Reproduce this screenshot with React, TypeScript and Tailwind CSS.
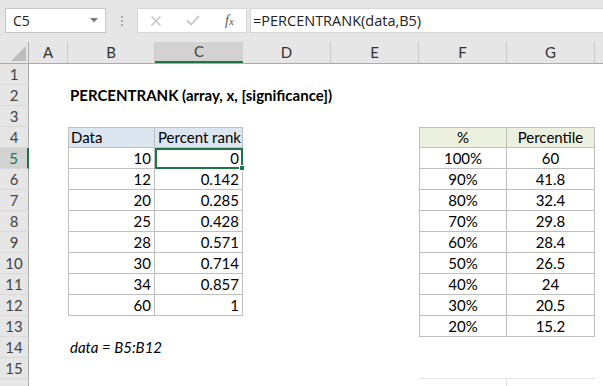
import React from 'react';

const font = "font-['Lato','Liberation_Sans',sans-serif]";

const colLetters = ['A', 'B', 'C', 'D', 'E', 'F', 'G', ''];
const colWidths = ['w-[39px]', 'w-[87px]', 'w-[88px]', 'w-[88px]', 'w-[88px]', 'w-[88px]', 'w-[88px]', 'flex-1'];

const leftTable: [string, string][] = [
  ['10', '0'],
  ['12', '0.142'],
  ['20', '0.285'],
  ['25', '0.428'],
  ['28', '0.571'],
  ['30', '0.714'],
  ['34', '0.857'],
  ['60', '1'],
];

const rightTable: [string, string][] = [
  ['100%', '60'],
  ['90%', '41.8'],
  ['80%', '32.4'],
  ['70%', '29.8'],
  ['60%', '28.4'],
  ['50%', '26.5'],
  ['40%', '24'],
  ['30%', '20.5'],
  ['20%', '15.2'],
];

type CellSpec = { text?: React.ReactNode; cls?: string };

// build the cell contents for one sheet row (columns A..H)
function rowCells(r: number): CellSpec[] {
  const cells: CellSpec[] = Array.from({ length: 8 }, () => ({}));
  const tb = 'border-r border-b border-[#bfbfbf]';

  if (r === 2) {
    cells[1] = { text: 'PERCENTRANK (array, x, [significance])', cls: 'font-bold whitespace-nowrap overflow-visible pl-[2px]' };
  }
  if (r === 4) {
    cells[1] = { text: 'Data', cls: `${tb} border-t border-l bg-[#dce6f1] pl-[2px]` };
    cells[2] = { text: 'Percent rank', cls: `${tb} border-t bg-[#dce6f1] pl-[3px]` };
    cells[5] = { text: '%', cls: `${tb} border-t border-l bg-[#ebf1de] justify-center` };
    cells[6] = { text: 'Percentile', cls: `${tb} border-t bg-[#ebf1de] justify-center` };
  }
  if (r >= 5 && r <= 12) {
    const [a, b] = leftTable[r - 5];
    cells[1] = { text: a, cls: `${tb} border-l justify-end pr-[3px]` };
    cells[2] = { text: b, cls: `${tb} justify-end pr-[3px]` };
  }
  if (r >= 5 && r <= 13) {
    const [a, b] = rightTable[r - 5];
    cells[5] = { text: a, cls: `${tb} border-l justify-center` };
    cells[6] = { text: b, cls: `${tb} justify-center` };
  }
  if (r === 14) {
    cells[1] = { text: 'data = B5:B12', cls: 'italic whitespace-nowrap pl-[2px]' };
  }
  if (r === 15) {
    cells[5] = { cls: 'border-b border-[#e3e3e3]' };
    cells[6] = { cls: 'border-b border-[#e3e3e3]' };
  }
  if (r === 16) {
    cells[5] = { cls: 'border-r border-[#e3e3e3]' };
  }
  return cells;
}

const FormulaBar = () => (
  <div className="flex h-[42px] items-start bg-[#e6e6e6] pt-[8px] pl-[5px]">
    <div className="flex h-[25px] w-[101px] items-center justify-between border border-[#c6c6c6] bg-white pl-[7px] pr-[7px] text-[14px] text-[#222] font-['Open_Sans','Liberation_Sans',sans-serif]">
      <span>C5</span>
      <svg width="8" height="5" viewBox="0 0 8 5">
        <path d="M0 0 L8 0 L4 4.5 Z" fill="#7a7a7a" />
      </svg>
    </div>
    <div className="flex h-[25px] w-[31px] flex-col items-center justify-center gap-[2px]">
      <span className="h-[2px] w-[2px] bg-[#a9a9a9]" />
      <span className="h-[2px] w-[2px] bg-[#a9a9a9]" />
      <span className="h-[2px] w-[2px] bg-[#a9a9a9]" />
    </div>
    <div className="flex h-[25px] w-[110px] items-center border border-[#d6d6d6] bg-white">
      <div className="flex w-[36px] justify-center">
        <svg width="12" height="12" viewBox="0 0 12 12">
          <path d="M1.5 1.5 L10.5 10.5 M10.5 1.5 L1.5 10.5" stroke="#c4c4c4" strokeWidth="1.6" />
        </svg>
      </div>
      <div className="flex w-[37px] justify-center">
        <svg width="14" height="11" viewBox="0 0 14 11">
          <path d="M1 5.5 L5 9.5 L13 1" stroke="#c4c4c4" strokeWidth="1.8" fill="none" />
        </svg>
      </div>
      <div className="flex flex-1 justify-center pl-[2px] text-[14px] italic text-[#555] font-['Liberation_Serif',serif]">
        <span>f</span>
        <span className="text-[11px] mt-[3px]">x</span>
      </div>
    </div>
    <div className="ml-[3px] flex h-[25px] flex-1 items-center border border-r-0 border-[#d6d6d6] bg-white pl-[2px] text-[14.5px] text-[#222] font-['Open_Sans','Liberation_Sans',sans-serif]">
      =PERCENTRANK(data,B5)
    </div>
  </div>
);

const ColumnHeaders = () => (
  <div className={`flex h-[22px] border-b border-[#ababab] bg-[#e6e6e6] text-[15px] text-[#333] ${font}`}>
    <div className="flex w-[29px] items-end justify-end border-r border-[#ababab] pb-[2px] pr-[2px]">
      <svg width="15" height="15" viewBox="0 0 15 15">
        <path d="M15 0 L15 15 L0 15 Z" fill="#bdbdbd" />
      </svg>
    </div>
    {colLetters.map((c, i) => (
      <div
        key={i}
        className={`flex items-center justify-center ${colWidths[i]} ${
          c === 'C'
            ? 'bg-[#d2d2d2] border-b-2 border-b-[#217346] text-[#444]'
            : i < 7
            ? 'border-r border-r-[#c9c9c9]'
            : ''
        }`}
      >
        {c}
      </div>
    ))}
  </div>
);

const SheetRow = ({ r }: { r: number }) => {
  const cells = rowCells(r);
  const active = r === 5;
  return (
    <div className={`flex h-[21px] text-[15px] text-black ${font}`}>
      <div
        className={`flex w-[29px] shrink-0 items-center justify-center border-b border-b-[#d9d9d9] text-[#444] ${
          active ? 'bg-[#d2d2d2] border-r-2 border-r-[#217346] text-[#217346]' : 'bg-[#e6e6e6] border-r border-r-[#ababab]'
        }`}
      >
        {r < 16 ? r : null}
      </div>
      {cells.map((c, i) => (
        <div
          key={i}
          className={`relative flex shrink-0 items-center ${colWidths[i]} ${c.cls ?? ''} ${
            r === 5 && i === 2 ? 'outline-2 -outline-offset-2 outline-[#217346]' : ''
          }`}
        >
          {c.text}
          {r === 5 && i === 2 && (
            <span className="absolute -bottom-[3px] -right-[3px] z-10 h-[6px] w-[6px] border border-white bg-[#217346]" />
          )}
        </div>
      ))}
    </div>
  );
};

export default function App() {
  const rows = Array.from({ length: 16 }, (_, i) => i + 1);
  return (
    <div className="h-[386px] w-[603px] overflow-hidden bg-white">
      <FormulaBar />
      <ColumnHeaders />
      {rows.map((r) => (
        <SheetRow key={r} r={r} />
      ))}
    </div>
  );
}
